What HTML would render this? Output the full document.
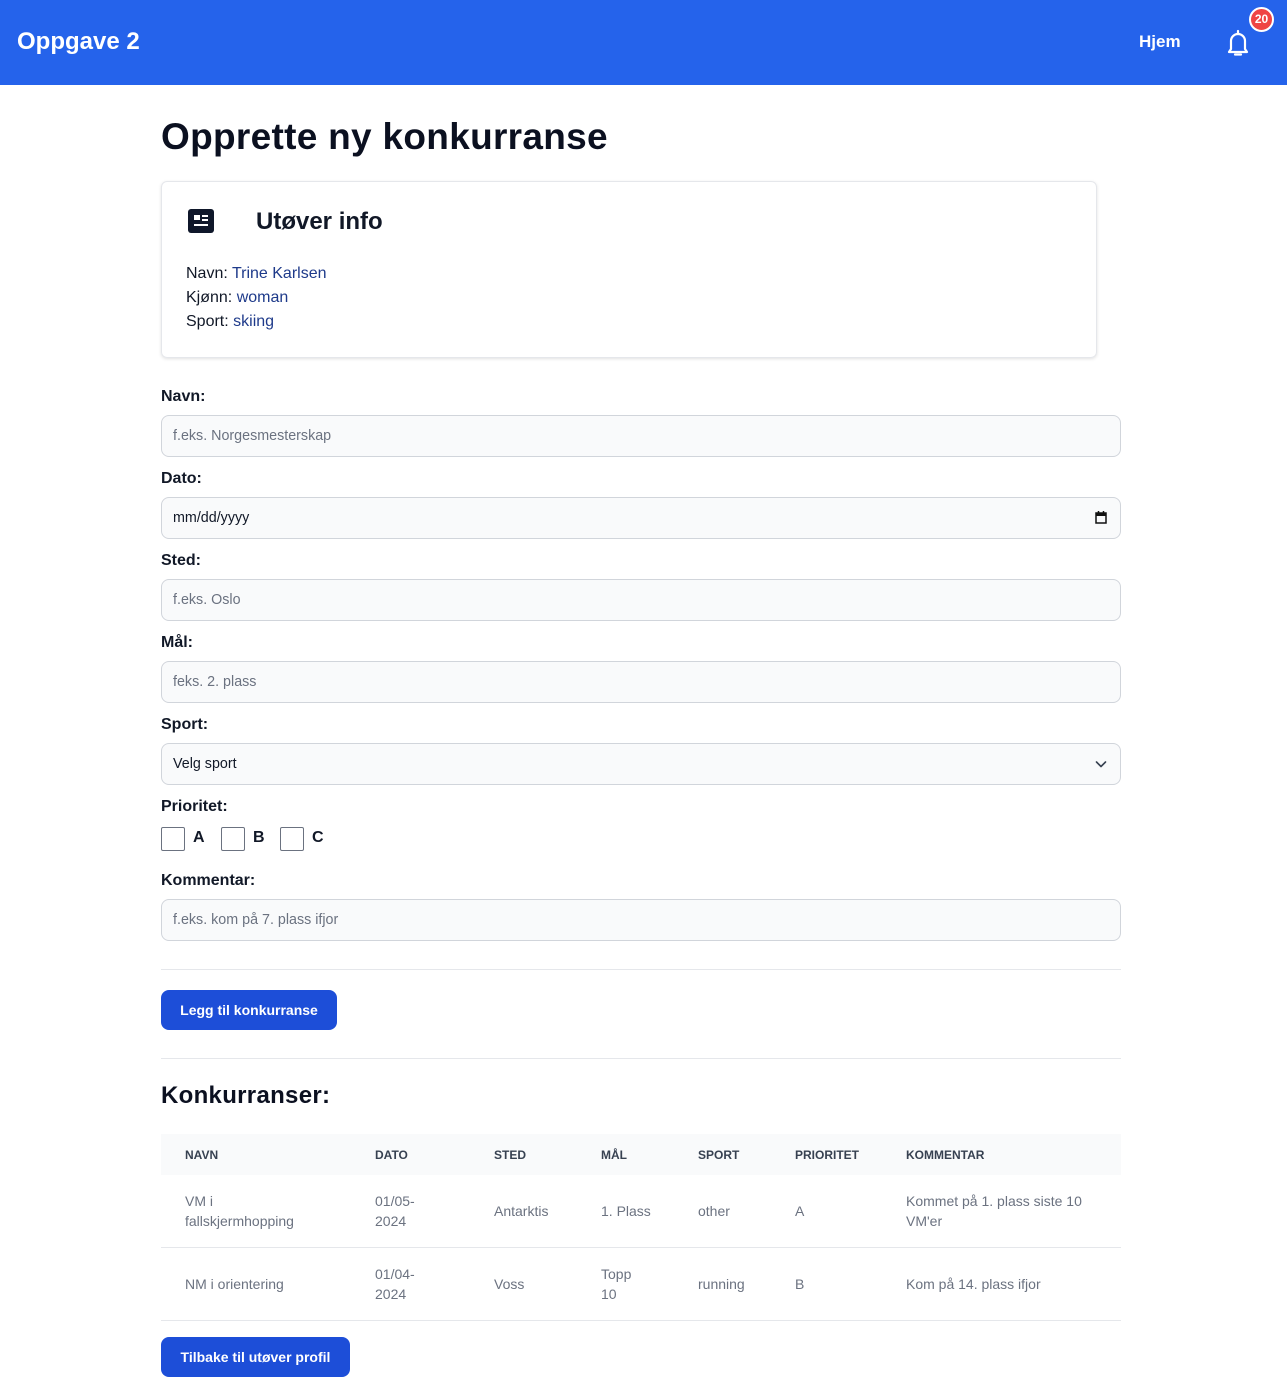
<!DOCTYPE html>
<html><head><meta charset="utf-8"><style>
*{box-sizing:border-box;margin:0;padding:0}
body{width:1287px;height:1396px;background:#fff;font-family:"Liberation Sans",sans-serif;color:#111827;position:relative;overflow:hidden}
.a{position:absolute;white-space:nowrap}
.hdr{position:absolute;left:0;top:0;width:1287px;height:85px;background:#2563eb}
.lbl{position:absolute;left:161px;font-size:16px;font-weight:bold;color:#111827;line-height:20px}
.inp{position:absolute;left:161px;width:960px;height:42px;background:#f9fafb;border:1px solid #d1d5db;border-radius:8px;font-size:14.3px;color:#6b7280;padding-left:11px;line-height:40px}
.hr{position:absolute;left:161px;width:960px;height:1px;background:#e5e7eb}
.btn{position:absolute;left:161px;height:40px;background:#1d4ed8;border-radius:8px;color:#fff;font-size:14px;font-weight:bold;text-align:center;line-height:40px}
.cb{position:absolute;top:827px;width:24px;height:24px;border:1px solid #6b7280;border-radius:2px;background:#fff}
.cl{position:absolute;top:829px;font-size:16px;font-weight:bold;line-height:18px}
.th{position:absolute;top:1147px;font-size:12px;font-weight:bold;color:#374151;line-height:16px}
.td{position:absolute;font-size:14px;color:#6b7280;line-height:20px;white-space:nowrap}
</style></head><body>
<div class="hdr"></div>
<div class="a" style="left:17px;top:27px;font-size:24px;font-weight:bold;color:#fff;line-height:30px">Oppgave 2</div>
<div class="a" style="left:1139px;top:32px;font-size:17px;font-weight:bold;color:#fff;line-height:20px">Hjem</div>
<svg class="a" style="left:1224px;top:28px" width="28" height="30" viewBox="0 0 28 30"><path d="M7 21 V13 a7 7 0 0 1 14 0 V21 L23 24 H5 Z" fill="none" stroke="#fff" stroke-width="2.2" stroke-linejoin="round"/><path d="M14 3 V6" stroke="#fff" stroke-width="2.2" stroke-linecap="round"/><path d="M11 26.5 H17" stroke="#fff" stroke-width="2.2" stroke-linecap="round"/></svg>
<div class="a" style="left:1249px;top:7px;width:25px;height:25px;border-radius:50%;background:#ef4444;border:2px solid #fff;color:#fff;font-size:12px;font-weight:bold;text-align:center;line-height:21px">20</div>

<div class="a" style="left:161px;top:116px;font-size:37px;letter-spacing:0.3px;font-weight:bold;color:#0b1020;line-height:42px">Opprette ny konkurranse</div>

<div class="a" style="left:161px;top:181px;width:936px;height:177px;border:1px solid #e5e7eb;border-radius:6px;box-shadow:0 1px 3px rgba(0,0,0,.12)"></div>
<svg class="a" style="left:188px;top:209px" width="26" height="24" viewBox="0 0 26 24"><rect width="26" height="24" rx="3" fill="#0f172a"/><rect x="6" y="6" width="6" height="5" fill="#fff"/><rect x="14" y="6" width="6" height="2" fill="#fff"/><rect x="14" y="10" width="6" height="2" fill="#fff"/><rect x="6" y="15" width="14" height="2" fill="#fff"/></svg>
<div class="a" style="left:256px;top:208px;font-size:24px;font-weight:bold;color:#111827;line-height:28px">Utøver info</div>
<div class="a" style="left:186px;top:264px;font-size:16px;line-height:20px;color:#111827">Navn: <span style="color:#1e3a8a">Trine Karlsen</span></div>
<div class="a" style="left:186px;top:288px;font-size:16px;line-height:20px;color:#111827">Kjønn: <span style="color:#1e3a8a">woman</span></div>
<div class="a" style="left:186px;top:312px;font-size:16px;line-height:20px;color:#111827">Sport: <span style="color:#1e3a8a">skiing</span></div>

<div class="lbl" style="top:387px">Navn:</div>
<div class="inp" style="top:415px">f.eks. Norgesmesterskap</div>
<div class="lbl" style="top:469px">Dato:</div>
<div class="inp" style="top:497px;color:#111827">mm/dd/yyyy</div>
<svg class="a" style="left:1095px;top:511px" width="12" height="13" viewBox="0 0 12 13"><rect x="1" y="2" width="10" height="10" fill="none" stroke="#111" stroke-width="1.5"/><rect x="1" y="2" width="10" height="3" fill="#111"/><path d="M3.5 0V2M8.5 0V2" stroke="#111" stroke-width="1.5"/></svg>
<div class="lbl" style="top:551px">Sted:</div>
<div class="inp" style="top:579px">f.eks. Oslo</div>
<div class="lbl" style="top:633px">Mål:</div>
<div class="inp" style="top:661px">feks. 2. plass</div>
<div class="lbl" style="top:715px">Sport:</div>
<div class="inp" style="top:743px;color:#111827">Velg sport</div>
<svg class="a" style="left:1095px;top:759px" width="12" height="10" viewBox="0 0 12 10"><path d="M1.5 3 L6 7.5 L10.5 3" fill="none" stroke="#374151" stroke-width="1.6" stroke-linecap="round" stroke-linejoin="round"/></svg>
<div class="lbl" style="top:797px">Prioritet:</div>
<div class="cb" style="left:161px"></div><div class="cl" style="left:193px">A</div>
<div class="cb" style="left:221px"></div><div class="cl" style="left:253px">B</div>
<div class="cb" style="left:280px"></div><div class="cl" style="left:312px">C</div>
<div class="lbl" style="top:871px">Kommentar:</div>
<div class="inp" style="top:899px">f.eks. kom på 7. plass ifjor</div>

<div class="hr" style="top:969px"></div>
<div class="btn" style="top:990px;width:176px">Legg til konkurranse</div>
<div class="hr" style="top:1058px"></div>

<div class="a" style="left:161px;top:1082px;font-size:24px;letter-spacing:0.3px;font-weight:bold;color:#0b1020;line-height:28px">Konkurranser:</div>
<div class="a" style="left:161px;top:1134px;width:960px;height:41px;background:#f9fafb"></div>
<div class="th" style="left:185px">NAVN</div>
<div class="th" style="left:375px">DATO</div>
<div class="th" style="left:494px">STED</div>
<div class="th" style="left:601px">MÅL</div>
<div class="th" style="left:698px">SPORT</div>
<div class="th" style="left:795px">PRIORITET</div>
<div class="th" style="left:906px">KOMMENTAR</div>

<div class="td" style="left:185px;top:1191px">VM i<br>fallskjermhopping</div>
<div class="td" style="left:375px;top:1191px">01/05-<br>2024</div>
<div class="td" style="left:494px;top:1201px">Antarktis</div>
<div class="td" style="left:601px;top:1201px">1. Plass</div>
<div class="td" style="left:698px;top:1201px">other</div>
<div class="td" style="left:795px;top:1201px">A</div>
<div class="td" style="left:906px;top:1191px">Kommet på 1. plass siste 10<br>VM'er</div>
<div class="hr" style="top:1247px"></div>

<div class="td" style="left:185px;top:1274px">NM i orientering</div>
<div class="td" style="left:375px;top:1264px">01/04-<br>2024</div>
<div class="td" style="left:494px;top:1274px">Voss</div>
<div class="td" style="left:601px;top:1264px">Topp<br>10</div>
<div class="td" style="left:698px;top:1274px">running</div>
<div class="td" style="left:795px;top:1274px">B</div>
<div class="td" style="left:906px;top:1274px">Kom på 14. plass ifjor</div>
<div class="hr" style="top:1320px"></div>

<div class="btn" style="top:1337px;width:189px">Tilbake til utøver profil</div>
</body></html>
